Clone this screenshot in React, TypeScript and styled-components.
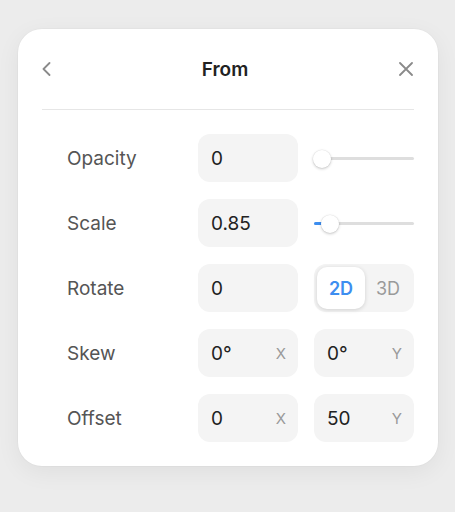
import * as React from 'react'
import styled, {createGlobalStyle} from 'styled-components'

const GlobalStyle = createGlobalStyle`
  html, body {
    margin: 0;
    padding: 0;
    background: #ececec;
    font-family: Inter, "Noto Sans", sans-serif;
  }
`

const Page = styled.div`
  width: 455px;
  height: 512px;
  box-sizing: border-box;
  padding: 29px 17px 0 18px;
`

const Card = styled.div`
  width: 420px;
  box-sizing: border-box;
  background: #fff;
  border-radius: 24px;
  padding: 0 24px 24px;
  box-shadow: 0 0 0 1px rgba(0, 0, 0, 0.02), 0 6px 24px rgba(0, 0, 0, 0.06);
`

const Header = styled.div`
  height: 80px;
  display: flex;
  align-items: center;
  justify-content: space-between;
  border-bottom: 1px solid #e6e6e6;
  padding-right: 1px;
`

const IconButton = styled.div`
  height: 20px;
  display: flex;
  align-items: center;
  color: #8a8a8a;
`

const Title = styled.div`
  font-size: 19px;
  font-weight: 600;
  color: #222;
`

const Rows = styled.div`
  display: flex;
  flex-direction: column;
  gap: 17px;
  padding-top: 24px;
`

const Row = styled.div`
  display: grid;
  grid-template-columns: 140px 100px 100px;
  column-gap: 16px;
  height: 48px;
  align-items: center;
`

const Label = styled.div`
  padding-left: 25px;
  font-size: 19px;
  color: #555;
`

const Field = styled.div`
  height: 48px;
  border-radius: 12px;
  background: #f4f4f4;
  display: flex;
  align-items: center;
  justify-content: space-between;
  padding: 0 12px 0 13px;
  box-sizing: border-box;
`

const Value = styled.span`
  font-size: 19px;
  color: #222;
`

const Axis = styled.span`
  font-size: 15px;
  color: #9a9a9a;
`

const Slider = styled.div`
  position: relative;
  height: 48px;
`

const Track = styled.div`
  position: absolute;
  left: 0;
  right: 0;
  top: 23px;
  height: 3px;
  border-radius: 2px;
  background: #dedede;
`

const Fill = styled.div`
  position: absolute;
  left: 0;
  top: 23px;
  height: 3px;
  border-radius: 2px;
  background: #3d8ef0;
`

const Thumb = styled.div`
  position: absolute;
  top: 16px;
  width: 18px;
  height: 18px;
  margin-left: -9px;
  border-radius: 50%;
  background: #fff;
  box-shadow: 0 1px 3px rgba(0, 0, 0, 0.22), 0 0 0 0.5px rgba(0, 0, 0, 0.05);
`

const Segmented = styled.div`
  height: 48px;
  border-radius: 12px;
  background: #f4f4f4;
  display: grid;
  grid-template-columns: 48px 1fr;
  padding: 3px;
  box-sizing: border-box;
`

const Segment = styled.div<{$active?: boolean}>`
  display: flex;
  align-items: center;
  justify-content: center;
  border-radius: 10px;
  font-size: 18px;
  font-weight: ${p => (p.$active ? 600 : 400)};
  color: ${p => (p.$active ? '#3d8ef0' : '#9a9a9a')};
  background: ${p => (p.$active ? '#fff' : 'transparent')};
  box-shadow: ${p => (p.$active ? '0 1px 4px rgba(0,0,0,0.15)' : 'none')};
`

const RangeSlider = ({value}: {value: number}) => (
  <Slider>
    <Track />
    {value > 0 && <Fill style={{width: `${8 + value * 84}px`}} />}
    <Thumb style={{left: `${8 + value * 84}px`}} />
  </Slider>
)

export default function App() {
  return (
    <Page>
      <GlobalStyle />
      <Card>
        <Header>
          <IconButton>
            <svg width="9" height="14" viewBox="0 0 9 14" fill="none" stroke="currentColor" strokeWidth="1.8" strokeLinecap="round" strokeLinejoin="round">
              <path d="M7.5 1L1.5 7l6 6" />
            </svg>
          </IconButton>
          <Title>From</Title>
          <IconButton>
            <svg width="14" height="14" viewBox="0 0 14 14" fill="none" stroke="currentColor" strokeWidth="1.8" strokeLinecap="round">
              <path d="M1 1l12 12M13 1L1 13" />
            </svg>
          </IconButton>
        </Header>
        <Rows>
          <Row>
            <Label>Opacity</Label>
            <Field><Value>0</Value></Field>
            <RangeSlider value={0} />
          </Row>
          <Row>
            <Label>Scale</Label>
            <Field><Value>0.85</Value></Field>
            <RangeSlider value={0.09} />
          </Row>
          <Row>
            <Label>Rotate</Label>
            <Field><Value>0</Value></Field>
            <Segmented>
              <Segment $active>2D</Segment>
              <Segment>3D</Segment>
            </Segmented>
          </Row>
          <Row>
            <Label>Skew</Label>
            <Field><Value>0°</Value><Axis>X</Axis></Field>
            <Field><Value>0°</Value><Axis>Y</Axis></Field>
          </Row>
          <Row>
            <Label>Offset</Label>
            <Field><Value>0</Value><Axis>X</Axis></Field>
            <Field><Value>50</Value><Axis>Y</Axis></Field>
          </Row>
        </Rows>
      </Card>
    </Page>
  )
}
